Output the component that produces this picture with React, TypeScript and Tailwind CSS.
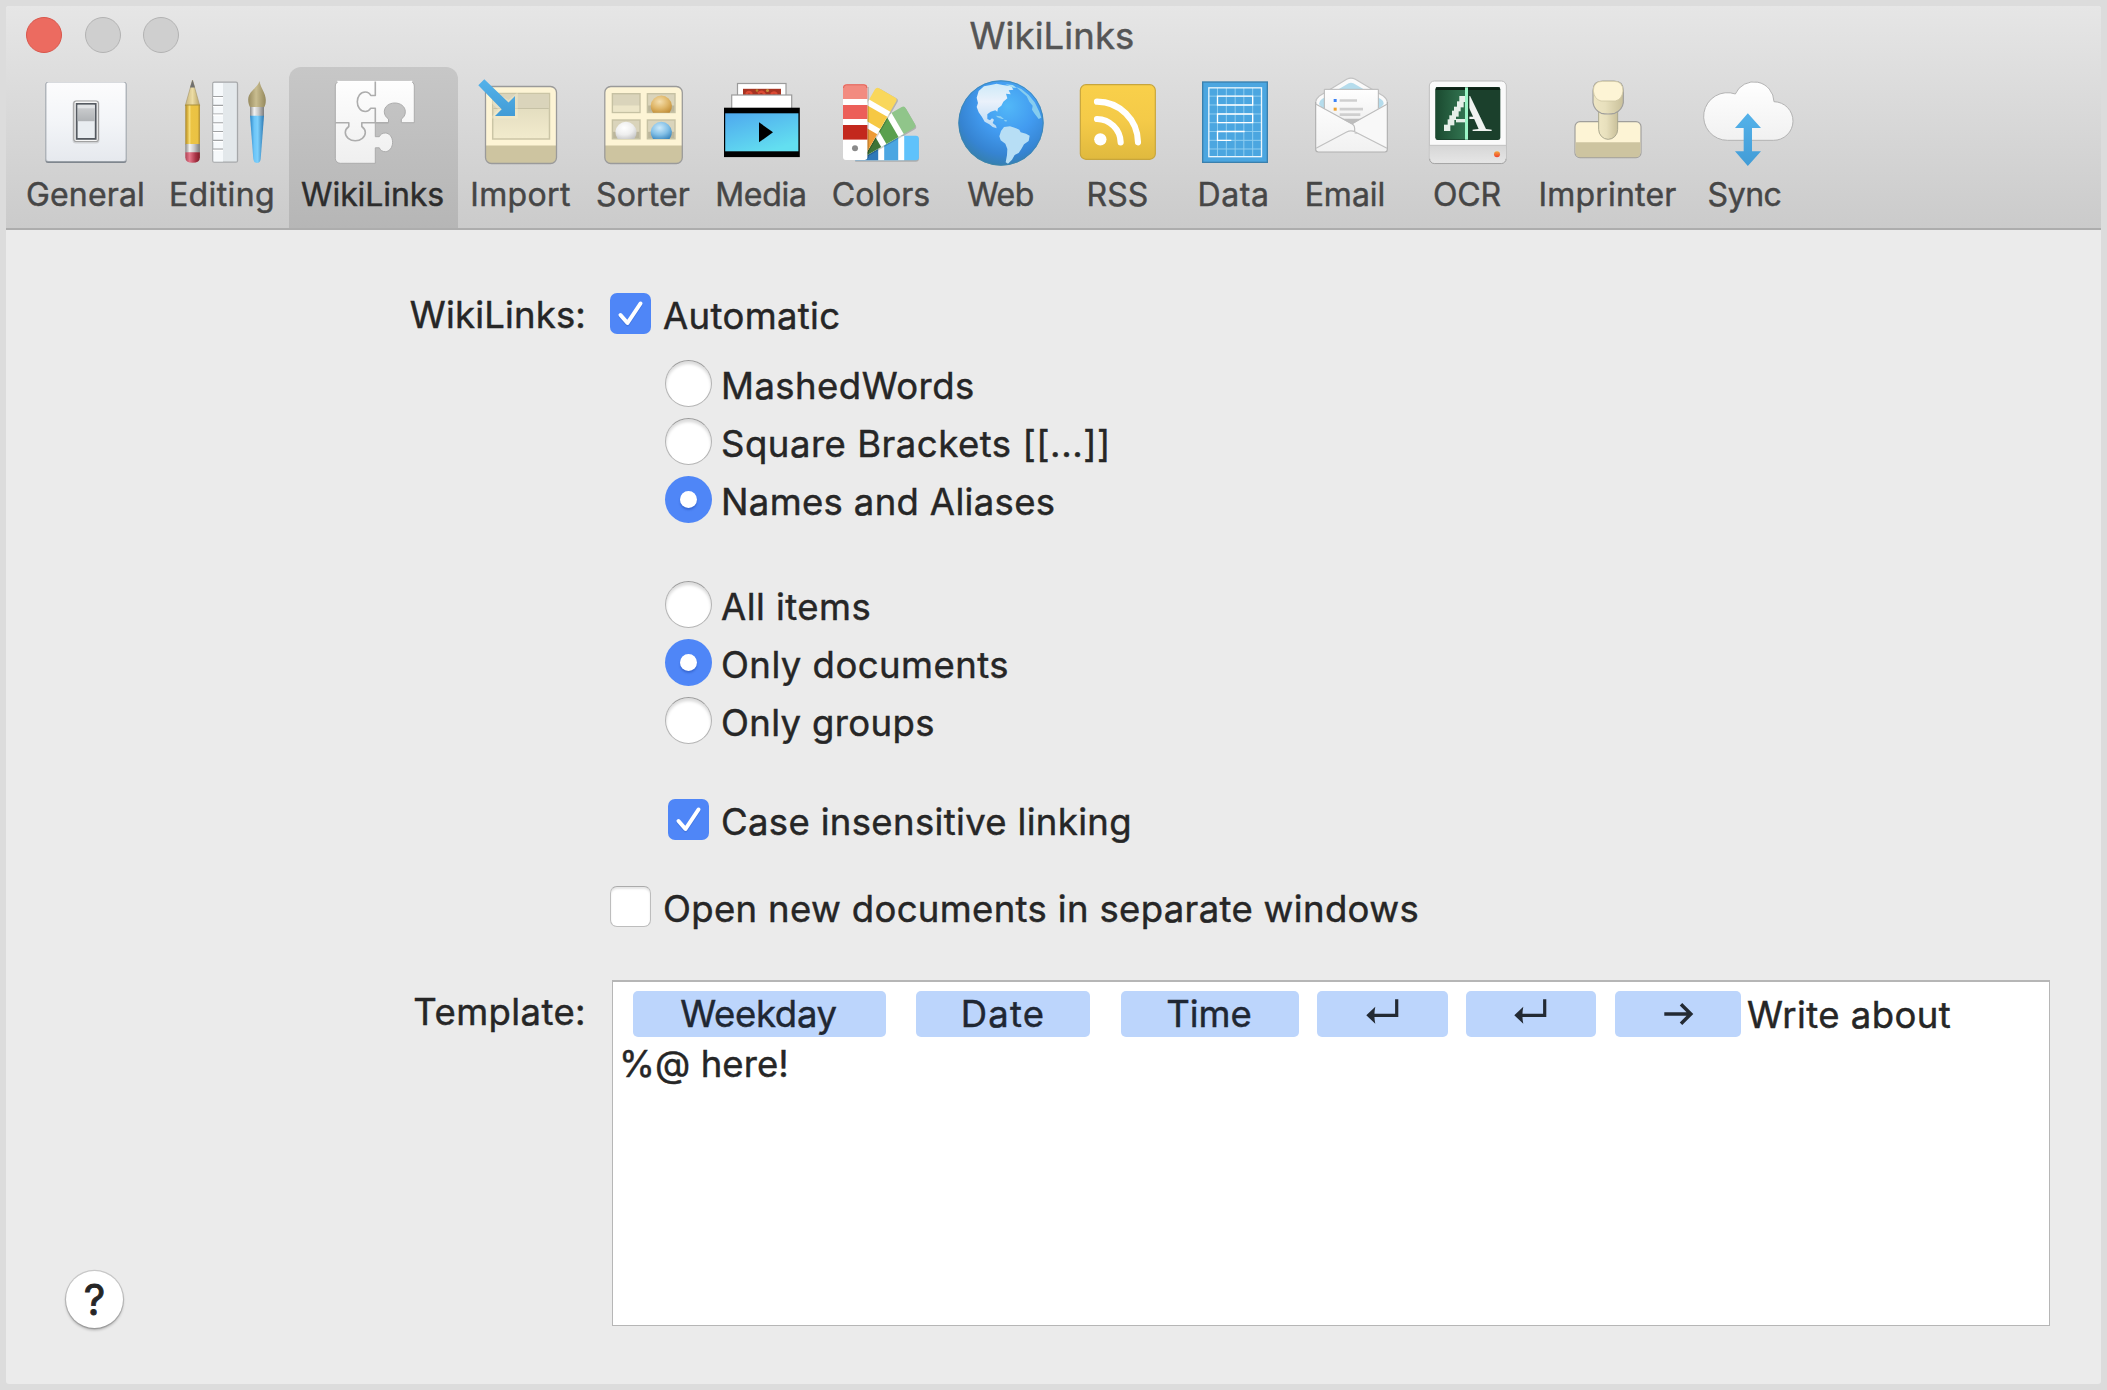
import React from "react";

const CREAM = "#fdf4d5";
const TAN = "#cdc4a0";

function GeneralIcon() {
  return (
    <g>
      <rect x="45.5" y="82" width="81" height="81" rx="2.5" fill="#7f868e" />
      <rect x="45.5" y="82" width="81" height="79.5" rx="2.5" fill="#b4b9bf" />
      <rect x="46.5" y="82.5" width="79" height="78.5" rx="2" fill="url(#plate)" />
      <rect x="72.5" y="100.5" width="27" height="43" rx="3.5" fill="#000" opacity=".12" />
      <rect x="73.8" y="101" width="24.6" height="40.5" rx="2.5" fill="#f7f7f7" stroke="#a2a2a2" strokeWidth="1.2" />
      <rect x="76.7" y="103.9" width="19" height="35" fill="#e9edf1" stroke="#555a61" strokeWidth="1.8" />
      <rect x="77.6" y="104.8" width="17.2" height="3.4" fill="#e1e3e5" />
      <rect x="77.6" y="108.2" width="17.2" height="13" fill="url(#switch)" />
    </g>
  );
}

function EditingIcon() {
  return (
    <g>
      <path d="M192.5 80 L199.7 105.5 H185.3 Z" fill="url(#wood)" stroke="#a4956a" strokeWidth=".6" />
      <path d="M192.5 79.7 L195 87.5 H190 Z" fill="#707070" />
      <rect x="185.3" y="105" width="14.6" height="39.5" fill="url(#yellowBarrel)" />
      <path d="M185.3 105 h14.6" stroke="#a88f3a" strokeWidth="1" />
      <rect x="185.3" y="144" width="14.6" height="8.5" fill="url(#metal)" />
      <path d="M185.3 152.2 h14.6 v5 q0 5.6 -7.3 5.6 q-7.3 0 -7.3 -5.6 z" fill="url(#eraser)" />
      <rect x="212.8" y="82.2" width="24.7" height="80" rx="1.5" fill="#e3e8eb" stroke="#a6a8aa" strokeWidth="1.3" />
      <rect x="213.5" y="83" width="9.5" height="78.5" fill="#f6f9fb" />
      {[96.5, 105.3, 114, 122.8, 131.5, 140.3, 149.2].map((y) => (
        <g key={y}>
          <path d={`M213 ${y} H223`} stroke="#a0a2a4" strokeWidth="1.2" />
          <path d={`M213 ${y + 1.2} H223`} stroke="#fff" strokeWidth="1.2" />
        </g>
      ))}
      <path d="M259.5 81 C260.5 88 265.8 93 265.8 100 C265.8 104 265 106 264 107.5 H250.3 C249 105.5 248.2 103 248.2 99.5 C248.4 91 257.5 88 259.5 81 Z" fill="url(#bristle)" />
      <rect x="250" y="107" width="14" height="9" fill="url(#metal)" />
      <path d="M250 115.8 H264 L260.7 159 Q260.2 163 257 163 Q253.8 163 253.3 159 Z" fill="url(#handle)" />
    </g>
  );
}

function WikiLinksIcon() {
  return (
    <g strokeLinejoin="round" transform="translate(-0.7 0)">
      <path
        d="M341 81 H410 a5 5 0 0 1 5 5 V122.700 H402 V119 C404.500 117.500 406 115 406 111.800 C406 106.500 401.300 103 395.500 103 C389.700 103 385 106.500 385 111.800 C385 115 387 117.500 389.200 119 V122.700 H376 V136.700 H380 C381 134.500 383 133 386 133 C390 133 393.300 137 393.300 142.300 C393.300 147.600 390 151.700 386 151.700 C383 151.700 381 150.200 380 147.800 H376 V163.300 H341 a5 5 0 0 1 -5 -5 V86 a5 5 0 0 1 5 -5 Z"
        fill="url(#puzzle)"
        stroke="#acacac"
        strokeWidth="1"
      />
      <path d="M338 81.300 H413" stroke="#fff" strokeWidth="1.200" />
      <path
        d="M376 81.500 V95.500 H371.500 C370.500 93.500 368.500 92 366 92 C361 92 358 96.500 358 101.700 C358 107 361 111.500 366 111.500 C368.500 111.500 370.500 110 371.500 108.200 H376 V122.700 M336 122.700 H349.500 V126.500 C347.500 128 346 130 346 132.500 C346 137 350.500 140.700 356 140.700 C361.500 140.700 366 137 366 132.500 C366 130 364.500 128 362.500 126.500 V122.700 H389"
        fill="none"
        stroke="#adadad"
        strokeWidth="1.600"
      />
    </g>
  );
}

function ImportIcon() {
  return (
    <g>
      <rect x="485.500" y="86.500" width="71" height="77" rx="6" fill={CREAM} />
      <path d="M485.500 145.500 H556.500 V157.500 a6 6 0 0 1 -6 6 H491.500 a6 6 0 0 1 -6 -6 Z" fill={TAN} />
      <rect x="485.500" y="86.500" width="71" height="77" rx="6" fill="none" stroke="#9a9a9a" strokeWidth="1.300" />
      <rect x="492.700" y="93.500" width="56.800" height="45.500" fill="url(#tray)" stroke="#cbc5a6" strokeWidth="1.500" />
      <rect x="493.400" y="94.200" width="55.400" height="14" fill="#dad4bb" />
      <path d="M493.400 108.500 h55.400" stroke="#c6c1a5" strokeWidth="1" />
      <path d="M486 86.500 L508.500 100 L517.800 92 V118.500 H490 L498.200 109.300 L486 98 Z" fill="#fdf4d5" opacity=".35" />
      <path d="M484.300 79.300 L508.500 102.500 L515 96 V116 H495 L501.700 109.300 L478.300 85.300 Z" fill="url(#blueArrow)" />
    </g>
  );
}

function SorterIcon() {
  const cells = [
    [611.7, 93],
    [646.7, 93],
    [611.7, 119.300],
    [646.7, 119.300],
  ];
  return (
    <g>
      <rect x="604.800" y="86.500" width="77.500" height="77" rx="6" fill={CREAM} />
      <path d="M604.800 145.500 H682.300 V157.500 a6 6 0 0 1 -6 6 H610.800 a6 6 0 0 1 -6 -6 Z" fill={TAN} />
      <rect x="604.800" y="86.500" width="77.500" height="77" rx="6" fill="none" stroke="#9a9a9a" strokeWidth="1.300" />
      {cells.map(([x, y], i) => (
        <g key={i}>
          <rect x={x + 0.700} y={y + 0.700} width="27.600" height="18.800" fill="#dad4bb" stroke="#c6c1a3" strokeWidth="1.400" />
          <rect x={x + 1.400} y={y + 12.500} width="26.200" height="6.300" fill={i === 0 ? "#ece5c8" : "#bcb69c"} />
        </g>
      ))}
      <path d="M653 112.800 A10.600 10.600 0 1 1 669.600 112.800 Z" fill="url(#ballGold)" />
      <path d="M617.700 139 A10.600 10.600 0 1 1 634.300 139 Z" fill="url(#ballWhite)" />
      <path d="M653 139 A10.600 10.600 0 1 1 669.600 139 Z" fill="url(#ballBlue)" />
    </g>
  );
}

function MediaIcon() {
  return (
    <g>
      <rect x="737.500" y="83.500" width="48.500" height="14" fill="#fff" stroke="#9b9b9b" strokeWidth="1.200" />
      <rect x="743" y="88.800" width="38" height="6.500" fill="#a63322" />
      <path d="M746 94 q3 -4 6 0 M758 93.500 q4 -4 7 1 M771 94 q3 -3 6 0" stroke="#dd4a33" strokeWidth="2.400" fill="none" />
      <circle cx="767.500" cy="90.500" r="1.500" fill="#c98f3c" />
      <circle cx="757" cy="90.500" r="1.300" fill="#b9802f" />
      <rect x="731.700" y="95" width="60" height="14" fill="#fff" stroke="#9b9b9b" strokeWidth="1.200" />
      <rect x="724" y="107.700" width="75.800" height="49.400" fill="#000" />
      <rect x="725.200" y="113.300" width="73.200" height="38" fill="url(#screen)" />
      <path d="M759 122.300 L773 132.300 L759 142.300 Z" fill="#000" />
    </g>
  );
}

function Swatch({ angle, a, b, c }: { angle: number; a: string; b: string; c: string }) {
  return (
    <g transform={`rotate(${angle} 855.200 148)`}>
      <path d="M843 148 V87.300 a3 3 0 0 1 3 -3 H864.400 a3 3 0 0 1 3 3 V148 Z" fill="#000" opacity=".18" transform="translate(1.500 0)" />
      <path d="M843 148 V87.300 a3 3 0 0 1 3 -3 H864.400 a3 3 0 0 1 3 3 V148 Z" fill={a} />
      <rect x="843" y="99" width="24.400" height="49" fill="#fff" />
      <rect x="843" y="105" width="24.400" height="14" fill={b} />
      <rect x="843" y="125" width="24.400" height="23" fill={c} />
    </g>
  );
}

function ColorsIcon() {
  return (
    <g>
      <Swatch angle={90} a="#5fc2fb" b="#4ba6e2" c="#3079b9" />
      <Swatch angle={60} a="#90c58a" b="#5aa04e" c="#3f7437" />
      <Swatch angle={30} a="#f9d75b" b="#f6c843" c="#ee9b36" />
      <rect x="845" y="87" width="23.800" height="71" fill="#000" opacity=".18" />
      <path d="M843 157 V87.300 a3 3 0 0 1 3 -3 H864.400 a3 3 0 0 1 3 3 V157 a3 3 0 0 1 -3 3 H846 a3 3 0 0 1 -3 -3 Z" fill="#fff" />
      <path d="M843 99 V87.300 a3 3 0 0 1 3 -3 H864.400 a3 3 0 0 1 3 3 V99 Z" fill="#f28b80" />
      <path d="M843.500 88 q0 -3.200 3 -3.200 h17.400 q3 0 3 3.200" fill="none" stroke="#e0665c" strokeWidth="1" />
      <rect x="843" y="105" width="24.400" height="14" fill="#ec5f59" />
      <rect x="843" y="125" width="24.400" height="14.600" fill="#c3281d" />
      <circle cx="855" cy="148.300" r="3" fill="#8a8a8a" />
    </g>
  );
}

function WebIcon() {
  return (
    <g transform="translate(820 75) scale(.33333)">
      <circle cx="543" cy="144" r="128" fill="url(#ocean)" />
      <circle cx="543" cy="144" r="126.500" fill="none" stroke="#3f87a8" strokeWidth="3" opacity=".7" />
      <path
        d="M470 68 L476 48 L492 34 L512 30 L530 26 L548 30 L574 34 L580 44 L566 46 L572 58 L558 56 L562 70 L550 80 L544 92 L534 100 L532 110 L526 106 L512 110 L502 118 L502 132 L510 136 L516 130 L522 134 L518 144 L528 152 L530 160 L518 156 L508 148 L494 140 L486 126 L476 112 L470 96 L474 84 Z"
        fill="url(#land)"
      />
      <path d="M528 122 L542 124 L552 132 L546 132 L532 127 Z M553 134 l8 2 l-2 4 l-6 -2 Z" fill="#8fd0f2" />
      <path
        d="M543 168 L552 156 L570 154 L584 158 L598 164 L602 172 L618 176 L629 182 L626 198 L612 208 L604 222 L596 234 L584 240 L576 254 L564 266 L557 262 L561 240 L562 222 L556 206 L542 196 L538 184 Z"
        fill="#b7def5"
      />
      <path d="M588 36 L604 42 L626 60 L644 82 L658 110 L664 128 L656 132 L644 116 L636 104 L638 92 L628 80 L620 64 L606 52 Z" fill="#8ed2ee" opacity=".9" />
      <path d="M556 28 L578 30 L590 38 L580 38 Z" fill="#a6e0f5" />
    </g>
  );
}

function RssIcon() {
  return (
    <g transform="translate(820 60) scale(.33333)">
      <rect x="781" y="74" width="225" height="224" rx="17" fill="url(#rss)" stroke="#c7a53c" strokeWidth="3.500" />
      <circle cx="841" cy="238" r="18.500" fill="#fff" />
      <path d="M831 177 A72 72 0 0 1 902 247 M831 125 A123 123 0 0 1 954 247" fill="none" stroke="#fff" strokeWidth="18.500" strokeLinecap="round" />
    </g>
  );
}

function DataIcon() {
  return (
    <g transform="translate(1170 60) scale(.33333)" fill="none">
      <rect x="98" y="66" width="194" height="241" fill="#4ba6e0" stroke="#3a80ad" strokeWidth="4" />
      <path
        d="M142.500 84 V290 M169 84 V290 M195.500 84 V290 M221.500 84 V290 M248 84 V290 M117 108.500 H275 M117 135 H275 M117 162 H275 M117 188 H275 M117 214.500 H275 M117 241 H275 M117 267 H275"
        stroke="#8fcdf0"
        strokeWidth="3"
      />
      <rect x="116.500" y="83.500" width="158" height="206.500" stroke="#eaf6fd" strokeWidth="4" />
      <path d="M142.500 108.500 H248 V135 H142.500 Z M142.500 162 H248 V188 H142.500 Z M224 214.500 H142.500 V241 H184" stroke="#fff" strokeWidth="4" />
    </g>
  );
}

function EmailIcon() {
  return (
    <g transform="translate(1170 60) scale(.33333)" strokeLinejoin="round">
      <path d="M437 126 Q438 116 448 108 L530 58 Q543 51 556 58 L640 108 Q651 116 652 126 V180 H437 Z" fill="#fafafa" stroke="#c2c2c2" strokeWidth="3.500" />
      <path d="M447 132 Q448 122 456 117 L536 70 Q543 66 550 70 L632 117 Q641 122 641 132 L620 160 H468 Z" fill="#b5dcec" />
      <path d="M463 88 H625 V180 L545 215 L463 180 Z" fill="url(#paper)" stroke="#b5b5b5" strokeWidth="3" />
      <rect x="491" y="117" width="9" height="9" fill="#3b82f6" />
      <rect x="491" y="143" width="9" height="9" fill="#f0a22e" />
      <path d="M509 121.500 H561 M509 147.500 H579 M509 164 H571" stroke="#cfcfcf" strokeWidth="8" />
      <path d="M512 176 H575 L548 194 Z" fill="#bdbdbd" />
      <path d="M437 132 L548 195 Q554 199 554 205 V222 H653 V268 Q653 276 645 276 H445 Q437 276 437 268 Z" fill="url(#envelope)" />
      <path d="M652 130 L548 192 Q555 198 554 205 V216 L652 262 Z" fill="#f8f8f8" />
      <path d="M437 126 V268 Q437 276 445 276 H645 Q652 276 652 268 V126" fill="none" stroke="#b0b0b0" strokeWidth="3.500" />
      <path d="M437 132 L548 193 Q554 197 554 205 V214 M652 132 L546 191" fill="none" stroke="#bcbcbc" strokeWidth="3.500" />
      <path d="M438 265 L530 216 Q543 209 556 216 L651 265" fill="none" stroke="#c0c0c0" strokeWidth="3.500" />
    </g>
  );
}

function OcrIcon() {
  const steps = [
    [868, 108, 18, 18],
    [861, 124, 20, 18],
    [852, 140, 20, 14],
    [846, 152, 20, 18],
    [838, 166, 20, 14],
    [833, 178, 20, 18],
    [822, 194, 19, 19],
  ];
  return (
    <g transform="translate(1170 60) scale(.33333)">
      <rect x="778" y="63" width="231" height="248" rx="15" fill="#fafafa" stroke="#bdbdbd" strokeWidth="3" />
      <path d="M779 256 H1008 V296 a14 14 0 0 1 -14 14 H793 a14 14 0 0 1 -14 -14 Z" fill="url(#chin)" />
      <path d="M779 256 H1008" stroke="#bdbdbd" strokeWidth="2.500" />
      <path d="M779 296 a14 14 0 0 0 14 14.500 H994 a14 14 0 0 0 14 -14.500" fill="none" stroke="#a5a5a5" strokeWidth="3" />
      <rect x="796" y="81" width="195" height="159" rx="7" fill="#1b402c" />
      <path d="M797 90 H886 V238 H803 a6 6 0 0 1 -6 -6 Z" fill="url(#scan)" />
      <rect x="798" y="82" width="191" height="8" fill="#0d2216" />
      {steps.map(([x, y, w, h]) => (
        <rect key={y} x={x} y={y} width={w} height={h} fill="#e6efe9" />
      ))}
      <rect x="858" y="177" width="28" height="10" fill="#e6efe9" />
      <g clipPath="url(#rightHalf)">
        <text x="818" y="213" fontSize="161" textLength="148" lengthAdjust="spacingAndGlyphs" fontFamily="Liberation Serif, serif" fill="#f0f4f1">
          A
        </text>
      </g>
      <rect x="885" y="82" width="9" height="157" fill="#9bf5c6" />
      <circle cx="981" cy="283" r="9" fill="url(#lamp)" />
    </g>
  );
}

function ImprinterIcon() {
  return (
    <g transform="translate(1500 60) scale(.33333)" stroke="#a09f9c" strokeWidth="3.500">
      <rect x="225" y="185" width="198" height="108" rx="15" fill={CREAM} />
      <path d="M227 247 H421 V279 a13 13 0 0 1 -13 13 H240 a13 13 0 0 1 -13 -13 Z" fill={TAN} stroke="none" />
      <path d="M296 145 H353 V208 a28.500 30 0 0 1 -57 0 Z" fill="url(#stem)" stroke="#aaa78e" strokeWidth="3" />
      <path d="M279 92 Q279 63 308 63 H342 Q370 63 370 92 V128 Q367 150 344 160 Q324 164 304 160 Q282 150 279 128 Z" fill="url(#stem)" />
      <path d="M280 93 Q280 64 308 64 H342 Q369 64 369 93 Q366 118 346 123 H303 Q283 118 280 93 Z" fill={CREAM} stroke="#cfc7a4" strokeWidth="2.500" />
    </g>
  );
}

function SyncIcon() {
  return (
    <g transform="translate(1500 60) scale(.33333)">
      <path d="M683 241 A71.500 71.500 0 1 1 706 102 A60.500 60.500 0 0 1 822 125 A58 58 0 0 1 820 241 Z" fill="url(#cloud)" stroke="#b3b3b3" strokeWidth="3" />
      <path d="M743.500 160 L783 204 H756 V274 H783 L743.500 318 L705 274 H731 V204 H705 Z" fill="url(#blueArrow)" />
    </g>
  );
}

function Lin({ id, stops, h }: { id: string; stops: [number, string][]; h?: boolean }) {
  return (
    <linearGradient id={id} x1="0" y1="0" x2={h ? 1 : 0} y2={h ? 0 : 1}>
      {stops.map(([o, c]) => (
        <stop key={o} offset={o} stopColor={c} />
      ))}
    </linearGradient>
  );
}

function Ball({ id, a, b, c }: { id: string; a: string; b: string; c: string }) {
  return (
    <radialGradient id={id} cx=".42" cy=".35" r=".75">
      <stop offset="0" stopColor={a} />
      <stop offset=".55" stopColor={b} />
      <stop offset="1" stopColor={c} />
    </radialGradient>
  );
}

function Gradients() {
  return (
    <svg className="absolute h-0 w-0" aria-hidden="true">
      <defs>
        <Lin id="plate" stops={[[0, "#fcfcfd"], [0.5, "#f3f5f8"], [1, "#e6e9ee"]]} />
        <Lin id="switch" stops={[[0, "#c9cbcd"], [1, "#b0b3b6"]]} />
        <Lin id="wood" h stops={[[0, "#c9b57a"], [0.5, "#ecdca4"], [1, "#b8a468"]]} />
        <Lin id="yellowBarrel" h stops={[[0, "#a9872c"], [0.15, "#d9b23e"], [0.3, "#f8df7c"], [0.4, "#ecc444"], [0.85, "#eac243"], [1, "#a9872c"]]} />
        <Lin id="metal" h stops={[[0, "#8a8a8a"], [0.3, "#f2f2f2"], [0.6, "#c9c9c9"], [1, "#7c7c7c"]]} />
        <Lin id="eraser" h stops={[[0, "#b04356"], [0.3, "#e4788a"], [0.7, "#a93346"], [1, "#7c1c26"]]} />
        <Lin id="bristle" h stops={[[0, "#978a5e"], [0.45, "#c9bd90"], [1, "#94885c"]]} />
        <Lin id="handle" h stops={[[0, "#2f86c4"], [0.3, "#6cc5f8"], [0.55, "#7dcffb"], [1, "#2b78b2"]]} />
        <Lin id="puzzle" stops={[[0, "#fefefe"], [1, "#efefef"]]} />
        <Lin id="tray" stops={[[0, "#ddd7ba"], [1, "#f2ebcd"]]} />
        <Lin id="blueArrow" stops={[[0, "#54b2ea"], [1, "#429cd6"]]} />
        <linearGradient id="screen" x1="0" y1="0" x2=".6" y2="1">
          <stop offset="0" stopColor="#4ea8ee" />
          <stop offset="1" stopColor="#63dff0" />
        </linearGradient>
        <Lin id="rss" stops={[[0, "#f9d04a"], [0.5, "#f4ca48"], [1, "#e0b93e"]]} />
        <Lin id="paper" stops={[[0, "#ffffff"], [1, "#ececec"]]} />
        <Lin id="envelope" stops={[[0, "#fdfdfd"], [1, "#f1f1f1"]]} />
        <Lin id="chin" stops={[[0, "#d6d6d6"], [1, "#e6e6e6"]]} />
        <Lin id="scan" h stops={[[0, "#1b4a30"], [1, "#327551"]]} />
        <Lin id="lamp" stops={[[0, "#f5a53a"], [1, "#ee3f2e"]]} />
        <Lin id="stem" h stops={[[0, "#eee6c3"], [0.4, "#e8e0bd"], [1, "#c9c09a"]]} />
        <Lin id="cloud" stops={[[0, "#ffffff"], [1, "#f1f1f1"]]} />
        <Lin id="land" stops={[[0, "#cdeaf8"], [0.4, "#eaf1fb"], [1, "#b9daf4"]]} />
        <Ball id="ballGold" a="#f5dfae" b="#dfb668" c="#c08c35" />
        <Ball id="ballWhite" a="#ffffff" b="#eeeeee" c="#c4c4c4" />
        <Ball id="ballBlue" a="#cdeafa" b="#82bfe6" c="#3a86bd" />
        <radialGradient id="ocean" cx=".58" cy=".3" r=".72">
          <stop offset="0" stopColor="#52b8f8" />
          <stop offset=".45" stopColor="#429bf0" />
          <stop offset=".8" stopColor="#3684d2" />
          <stop offset="1" stopColor="#357fae" />
        </radialGradient>
        <clipPath id="rightHalf">
          <rect x="898" y="90" width="92" height="148" />
        </clipPath>
      </defs>
    </svg>
  );
}

type Tool = { label: string; x: number; w: number; box: string; text: string; icon: () => React.ReactElement; selected?: boolean };

const tools: Tool[] = [
  { label: "General", x: 14, w: 143, box: "w-[143px]", text: "tracking-[0.15px]", icon: GeneralIcon },
  { label: "Editing", x: 157, w: 132, box: "w-[132px]", text: "mr-[2px] tracking-[0.38px]", icon: EditingIcon },
  { label: "WikiLinks", x: 289, w: 169, box: "w-[169px]", text: "mr-[2px] tracking-[-0.1px]", icon: WikiLinksIcon, selected: true },
  { label: "Import", x: 458, w: 125, box: "w-[125px]", text: "tracking-[0.33px]", icon: ImportIcon },
  { label: "Sorter", x: 583, w: 120, box: "w-[120px]", text: "tracking-[0.12px]", icon: SorterIcon },
  { label: "Media", x: 703, w: 117, box: "w-[117px]", text: "mr-[1px] tracking-[-0.23px]", icon: MediaIcon },
  { label: "Colors", x: 820, w: 122, box: "w-[122px]", text: "tracking-normal", icon: ColorsIcon },
  { label: "Web", x: 942, w: 117, box: "w-[117px]", text: "tracking-[-0.48px]", icon: WebIcon },
  { label: "RSS", x: 1059, w: 117, box: "w-[117px]", text: "tracking-[0.09px]", icon: RssIcon },
  { label: "Data", x: 1176, w: 115, box: "w-[115px]", text: "tracking-[0.54px]", icon: DataIcon },
  { label: "Email", x: 1291, w: 108, box: "w-[108px]", text: "tracking-normal", icon: EmailIcon },
  { label: "OCR", x: 1399, w: 136, box: "w-[136px]", text: "tracking-[-0.07px]", icon: OcrIcon },
  { label: "Imprinter", x: 1535, w: 146, box: "w-[146px]", text: "mr-[1px] tracking-[0.18px]", icon: ImprinterIcon },
  { label: "Sync", x: 1681, w: 128, box: "w-[128px]", text: "mr-[1px] tracking-[-0.47px]", icon: SyncIcon },
];

function ToolbarItem({ tool }: { tool: Tool }) {
  const Icon = tool.icon;
  return (
    <div
      className={`flex h-[161px] shrink-0 flex-col items-center pt-[9px] ${tool.box} ${
        tool.selected ? "rounded-t-[12px] bg-linear-to-b from-[#c7c7c7] to-[#b6b6b6] text-[#2c2c2c]" : "text-[#464646]"
      }`}
    >
      <svg className="block h-[92px] w-full overflow-visible" viewBox={`${tool.x} 76 ${tool.w} 92`}>
        <Icon />
      </svg>
      <span className={`mt-[7px] whitespace-nowrap text-[32px] leading-[40px] ${tool.text}`}>{tool.label}</span>
    </div>
  );
}

function Checkbox({ checked }: { checked?: boolean }) {
  return checked ? (
    <span className="block h-[41px] w-[41px] shrink-0 rounded-[7px] bg-[#4f86f7]">
      <svg viewBox="0 0 41 41" className="h-full w-full" fill="none" strokeLinecap="round" strokeLinejoin="round" strokeWidth="4">
        <path d="M10.500 23.500 L17.500 31.500 L30.500 12" stroke="#3d6fd6" opacity=".6" />
        <path d="M10.500 22 L17.500 30 L30.500 10.500" stroke="#fff" />
      </svg>
    </span>
  ) : (
    <span className="block h-[41px] w-[41px] shrink-0 rounded-[7px] border border-[#bdbdbd] border-t-[#ababab] bg-white shadow-[inset_0_2px_2px_rgba(0,0,0,0.10)]" />
  );
}

function Radio({ label, text, on }: { label: string; text: string; on?: boolean }) {
  return (
    <div className="flex h-[58px] items-start">
      {on ? (
        <span className="mt-[3px] flex h-[47px] w-[47px] shrink-0 items-center justify-center rounded-full bg-[#4f86f7]">
          <span className="h-[17px] w-[17px] rounded-full bg-white shadow-[0_2px_2px_rgba(30,70,170,0.45)]" />
        </span>
      ) : (
        <span className="mt-[3px] h-[47px] w-[47px] shrink-0 rounded-full border border-[#b4b4b4] border-t-[#9c9c9c] bg-white shadow-[inset_0_3px_3px_rgba(0,0,0,0.14)]" />
      )}
      <span className={`whitespace-nowrap leading-[59px] ${text}`}>{label}</span>
    </div>
  );
}

function ReturnGlyph() {
  return (
    <svg className="mr-[2px] mb-[7px] h-[26px] w-[34px]" viewBox="1365 998 34 26" fill="none">
      <path d="M1396.700 999.300 V1015.300 H1372" stroke="#232a33" strokeWidth="3.200" />
      <path d="M1366.300 1015.300 L1375.300 1006.800 Q1373.500 1015.300 1375.300 1023.800 Z" fill="#232a33" />
    </svg>
  );
}

function TabGlyph() {
  return (
    <svg className="mr-[1px] h-[24px] w-[32px]" viewBox="1661 1004.500 32 24" fill="none" strokeLinejoin="miter">
      <path d="M1663.300 1016.500 H1689 M1680 1006.800 L1689.800 1016.500 L1680 1026.200" stroke="#232a33" strokeWidth="3.500" />
    </svg>
  );
}

function Token({ box, children }: { box: string; children: React.ReactNode }) {
  return (
    <span className={`flex h-[46px] shrink-0 items-center justify-center rounded-[5px] bg-[#bcd5fc] leading-[48px] text-[#1f2733] ${box}`}>
      {children}
    </span>
  );
}

export default function App() {
  return (
    <div className="h-[1390px] w-[2107px] overflow-hidden bg-[#dcdcdc] p-[6px] font-['Inter','Liberation_Sans',sans-serif] text-[36.5px] text-[#262626] [-webkit-text-stroke-width:0.45px]">
      <Gradients />
      <div className="flex h-[1378px] w-[2095px] flex-col overflow-hidden rounded-[3px] bg-[#ebebeb]">
        <header className="h-[224px] shrink-0 border-b-2 border-[#adadad] bg-linear-to-b from-[#e6e6e6] to-[#cbcbcb]">
          <div className="grid h-[61px] grid-cols-[1fr_auto_1fr] items-start">
            <div className="mt-[11px] ml-5 flex gap-[22.5px]">
              <span className="h-[36px] w-[36px] rounded-full border border-[#d9564b] bg-[#ec6b60]" />
              <span className="h-[36px] w-[36px] rounded-full border border-[#b3b3b3] bg-[#cfcfcf]" />
              <span className="h-[36px] w-[36px] rounded-full border border-[#b3b3b3] bg-[#cfcfcf]" />
            </div>
            <h1 className="mr-[3px] leading-[60px] tracking-[0.1px] text-[#555555]">WikiLinks</h1>
          </div>
          <nav className="flex pl-2">
            {tools.map((t) => (
              <ToolbarItem key={t.label} tool={t} />
            ))}
          </nav>
        </header>

        <main className="flex flex-col">
          <div className="mt-[57px] flex h-[70px] items-start">
            <span className="mt-[-1px] w-[604px] pr-[24px] text-right leading-[59px] tracking-[0.16px]">WikiLinks:</span>
            <div className="flex items-start">
              <div className="mt-[6px]">
                <Checkbox checked />
              </div>
              <span className="ml-[12px] leading-[59px] tracking-[0.35px]">Automatic</span>
            </div>
          </div>

          <div className="ml-[659px]">
            <Radio label="MashedWords" text="ml-[9px] tracking-[0.45px]" />
            <Radio label="Square Brackets [[...]]" text="ml-[9px] tracking-[0.52px]" />
            <Radio label="Names and Aliases" text="ml-[9px] tracking-[0.34px]" on />
          </div>

          <div className="mt-[47px] ml-[659px]">
            <Radio label="All items" text="ml-[9px] tracking-[0.45px]" />
            <Radio label="Only documents" text="ml-[9px] tracking-[0.46px]" on />
            <Radio label="Only groups" text="ml-[9px] tracking-[0.36px]" />
          </div>

          <div className="mt-[41px] ml-[662px] flex h-[59px] items-start">
            <div className="mt-[6px]">
              <Checkbox checked />
            </div>
            <span className="ml-[12px] leading-[59px] tracking-[0.34px]">Case insensitive linking</span>
          </div>

          <div className="mt-[28px] ml-[604px] flex h-[59px] items-start">
            <div className="mt-[6px]">
              <Checkbox />
            </div>
            <span className="ml-[12px] leading-[59px] tracking-[0.34px]">Open new documents in separate windows</span>
          </div>

          <div className="mt-[41px] flex items-start">
            <span className="mt-[3px] w-[606px] shrink-0 pr-[26px] text-right leading-[59px] tracking-[0.4px]">Template:</span>
            <div className="h-[346px] w-[1438px] border border-t-2 border-[#b6b6b6] bg-white">
              <div className="flex pt-[9px] pl-[20px]">
                <Token box="w-[253px] pr-[2px] tracking-[-0.3px]">Weekday</Token>
                <Token box="ml-[30px] w-[174px] tracking-[1.2px]">Date</Token>
                <Token box="ml-[31px] w-[178px] pr-[2px] tracking-[-0.1px]">Time</Token>
                <Token box="ml-[18px] w-[131px]">
                  <ReturnGlyph />
                </Token>
                <Token box="ml-[18px] w-[130px]">
                  <ReturnGlyph />
                </Token>
                <Token box="ml-[19px] w-[126px]">
                  <TabGlyph />
                </Token>
                <span className="ml-[6px] leading-[48px] tracking-[0.45px]">Write about</span>
              </div>
              <div className="pl-[6px] leading-[51px] tracking-[0.1px]">%@ here!</div>
            </div>
          </div>
        </main>

        <div className="mt-[-55px] ml-[60px]">
          <button className="flex h-[57px] w-[57px] items-center justify-center rounded-full bg-white text-[42px] leading-none shadow-[0_0_0_1.2px_rgba(0,0,0,0.14),0_2px_3px_rgba(0,0,0,0.28)] [-webkit-text-stroke-width:0.9px]">
            ?
          </button>
        </div>
      </div>
    </div>
  );
}
